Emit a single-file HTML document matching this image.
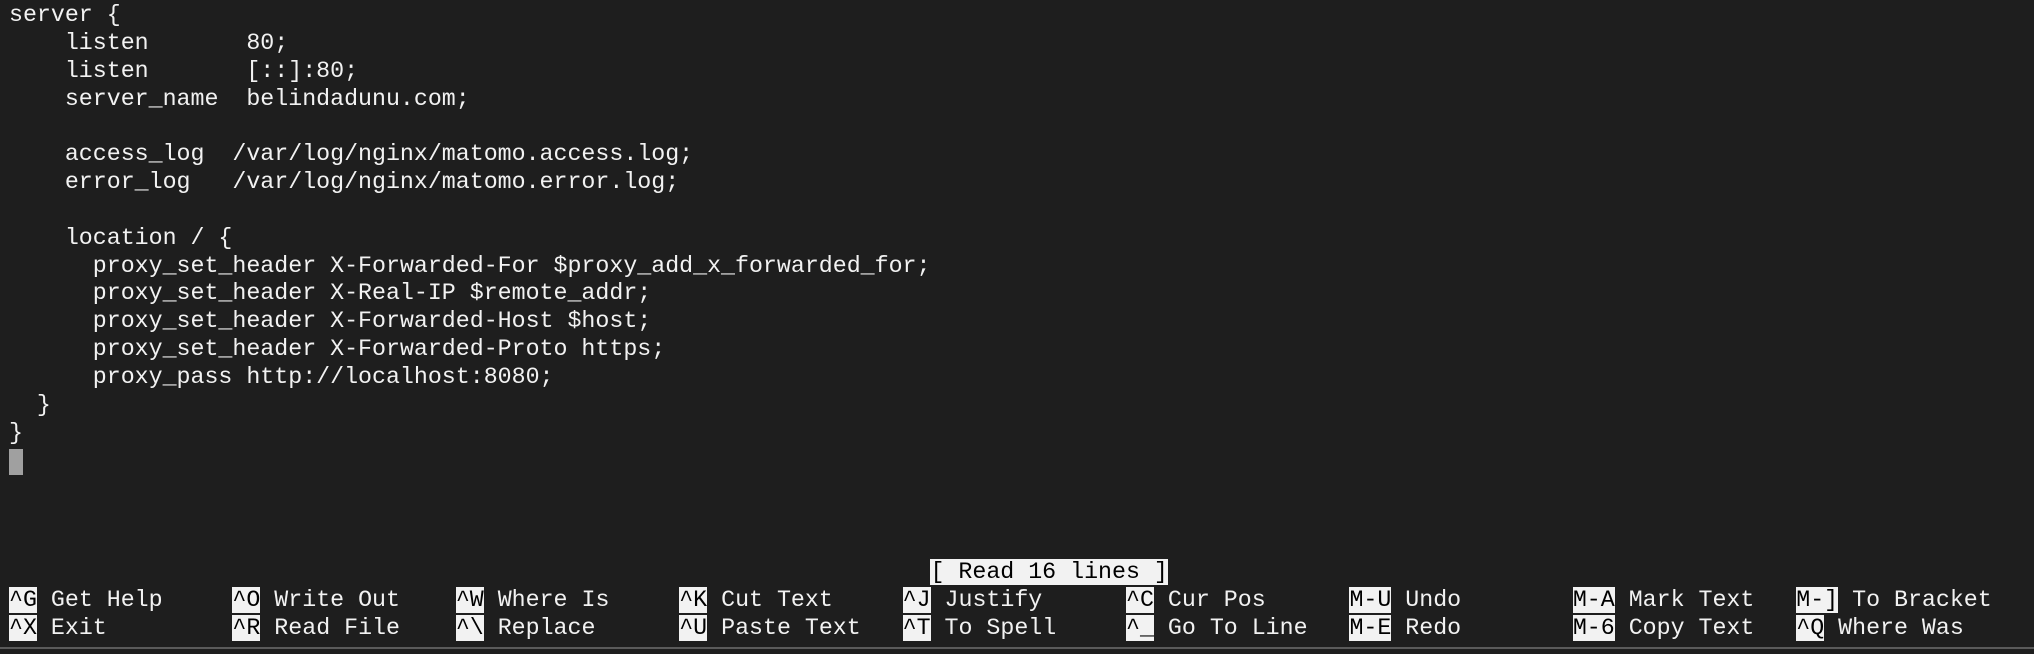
<!DOCTYPE html>
<html><head><style>
html,body{margin:0;padding:0;background:#1e1e1e;width:2034px;height:654px;overflow:hidden}
pre{position:absolute;left:9px;top:2px;margin:0;font-family:"Liberation Mono",monospace;font-size:23.28px;line-height:27.85px;color:#f2f2f2;white-space:pre}
.h{background:#f2f2f2;color:#000}
.c{display:inline-block;width:14px;height:26px;background:#a0a0a0;vertical-align:top;margin-top:1px}
.b{position:absolute;left:0;right:0;top:647px;height:2px;background:#5a5a5a}
</style></head><body>
<pre>server {
    listen       80;
    listen       [::]:80;
    server_name  belindadunu.com;

    access_log  /var/log/nginx/matomo.access.log;
    error_log   /var/log/nginx/matomo.error.log;

    location / {
      proxy_set_header X-Forwarded-For $proxy_add_x_forwarded_for;
      proxy_set_header X-Real-IP $remote_addr;
      proxy_set_header X-Forwarded-Host $host;
      proxy_set_header X-Forwarded-Proto https;
      proxy_pass http://localhost:8080;
  }
}
<span class="c"></span>



                                                                  <span class="h">[ Read 16 lines ]</span>
<span class="h">^G</span> Get Help     <span class="h">^O</span> Write Out    <span class="h">^W</span> Where Is     <span class="h">^K</span> Cut Text     <span class="h">^J</span> Justify      <span class="h">^C</span> Cur Pos      <span class="h">M-U</span> Undo        <span class="h">M-A</span> Mark Text   <span class="h">M-]</span> To Bracket
<span class="h">^X</span> Exit         <span class="h">^R</span> Read File    <span class="h">^\</span> Replace      <span class="h">^U</span> Paste Text   <span class="h">^T</span> To Spell     <span class="h">^_</span> Go To Line   <span class="h">M-E</span> Redo        <span class="h">M-6</span> Copy Text   <span class="h">^Q</span> Where Was</pre>
<div class="b"></div>
</body></html>
